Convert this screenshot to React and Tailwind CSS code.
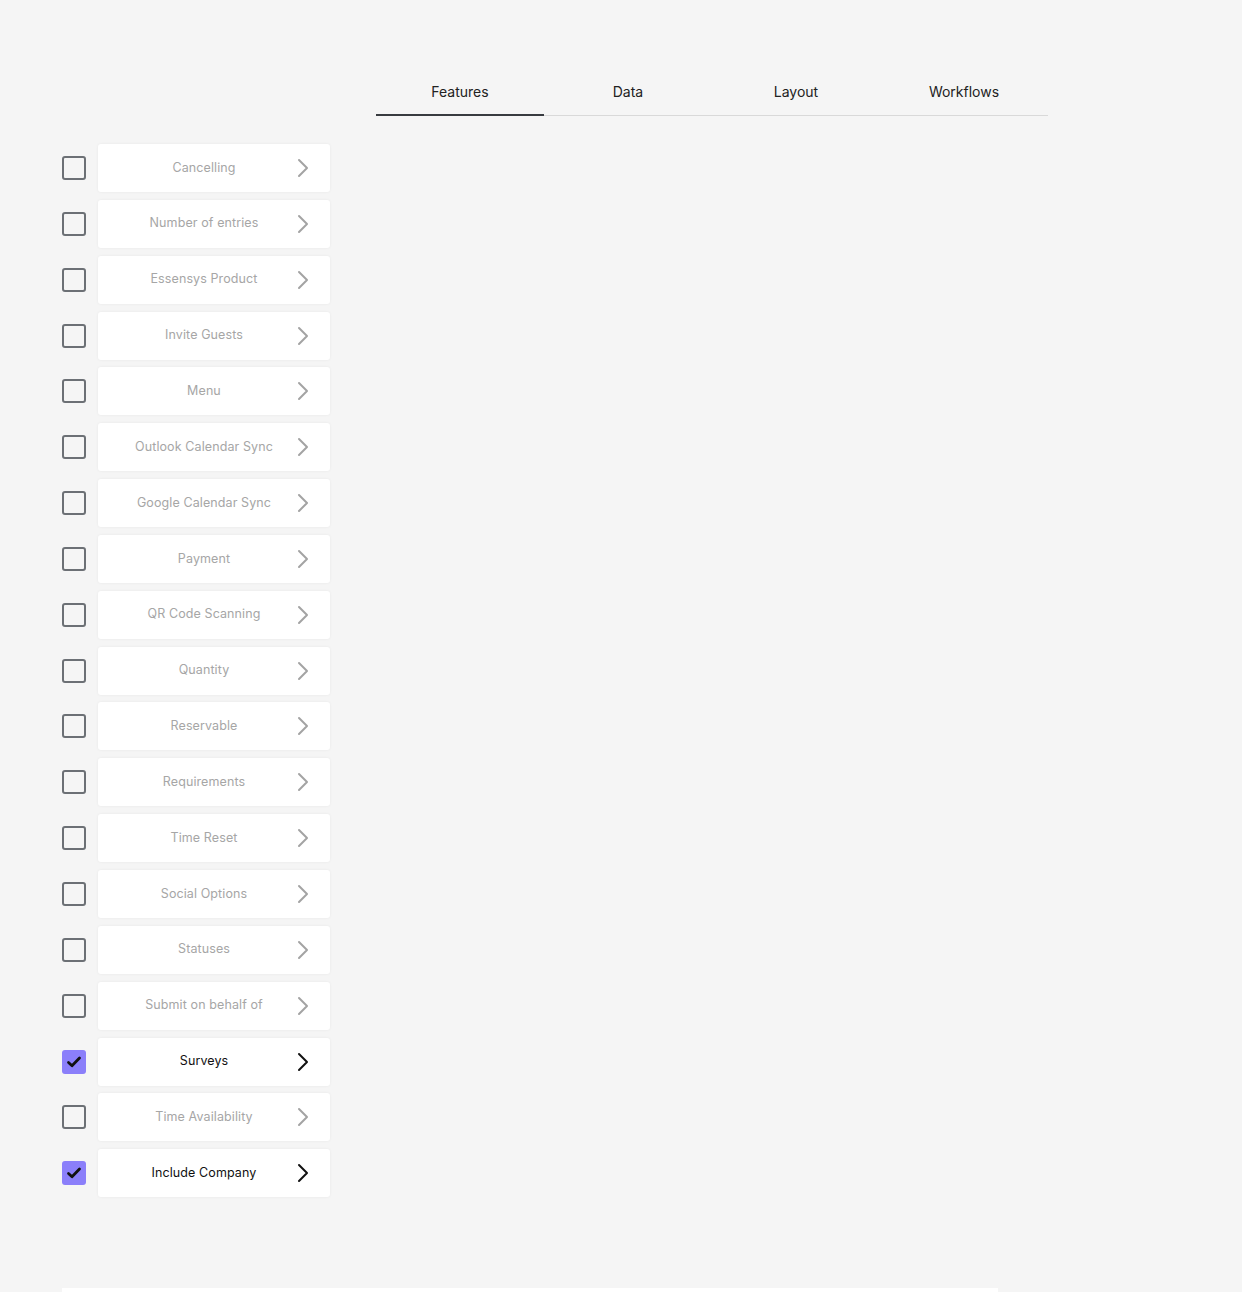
import React, { useState } from 'react'

const tabs = ['Features', 'Data', 'Layout', 'Workflows']

const features = [
  { name: 'Cancelling', on: false },
  { name: 'Number of entries', on: false },
  { name: 'Essensys Product', on: false },
  { name: 'Invite Guests', on: false },
  { name: 'Menu', on: false },
  { name: 'Outlook Calendar Sync', on: false },
  { name: 'Google Calendar Sync', on: false },
  { name: 'Payment', on: false },
  { name: 'QR Code Scanning', on: false },
  { name: 'Quantity', on: false },
  { name: 'Reservable', on: false },
  { name: 'Requirements', on: false },
  { name: 'Time Reset', on: false },
  { name: 'Social Options', on: false },
  { name: 'Statuses', on: false },
  { name: 'Submit on behalf of', on: false },
  { name: 'Surveys', on: true },
  { name: 'Time Availability', on: false },
  { name: 'Include Company', on: true },
]

function Chevron({ active }) {
  return (
    <svg width="14" height="20" viewBox="0 0 14 20" fill="none">
      <path
        d="M3 2l8 8-8 8"
        stroke={active ? '#111111' : '#a3a3a3'}
        strokeWidth="2"
        strokeLinecap="round"
        strokeLinejoin="round"
      />
    </svg>
  )
}

function FeatureRow({ name, on, onToggle }) {
  return (
    <div className="flex items-center gap-3">
      <button
        onClick={onToggle}
        className={
          on
            ? 'w-6 h-6 rounded-[3px] bg-[#8b7ffa] flex items-center justify-center'
            : 'w-6 h-6 rounded-[3px] border-2 border-[#6c7075] bg-transparent'
        }
      >
        {on && (
          <svg width="18" height="18" viewBox="0 0 18 18" fill="none">
            <path d="M3.5 9.5l3.5 3.2 7.5-7.7" stroke="#111" strokeWidth="2.8" strokeLinecap="round" strokeLinejoin="round" />
          </svg>
        )}
      </button>
      <div className="w-[232px] h-12 bg-white rounded-[3px] shadow-[0_0_3px_rgba(0,0,0,0.06)] flex items-center pl-[14px] pr-5">
        <span className={on ? 'flex-1 text-center text-[12.5px] text-[#111] tracking-[0.1px]' : 'flex-1 text-center text-[12.5px] text-[#a6a6a6] tracking-[0.1px]'}>
          {name}
        </span>
        <Chevron active={on} />
      </div>
    </div>
  )
}

export default function App() {
  const [active, setActive] = useState('Features')
  const [items, setItems] = useState(features)

  const toggle = i => setItems(items.map((f, j) => (j === i ? { ...f, on: !f.on } : f)))

  return (
    <div className="min-h-[1292px] bg-[#f5f5f5] font-['Inter',sans-serif] overflow-hidden">
      <div className="pt-[72px] pl-[376px]">
        <div className="flex w-[672px] border-b border-[#d9d9d9]">
          {tabs.map(t => (
            <button
              key={t}
              onClick={() => setActive(t)}
              className={
                t === active
                  ? 'w-[168px] h-[44px] pb-[3px] text-[14px] text-[#222] border-b-2 border-[#383b40] -mb-px'
                  : 'w-[168px] h-[44px] pb-[3px] text-[14px] text-[#222] border-b-2 border-transparent -mb-px'
              }
            >
              {t}
            </button>
          ))}
        </div>
      </div>

      <div className="pl-[62px] pt-[28px] flex flex-col gap-[7.85px]">
        {items.map((f, i) => (
          <FeatureRow key={f.name} name={f.name} on={f.on} onToggle={() => toggle(i)} />
        ))}
      </div>

      <div className="ml-[62px] mt-[91px] w-[936px] h-10 bg-white" />
    </div>
  )
}
